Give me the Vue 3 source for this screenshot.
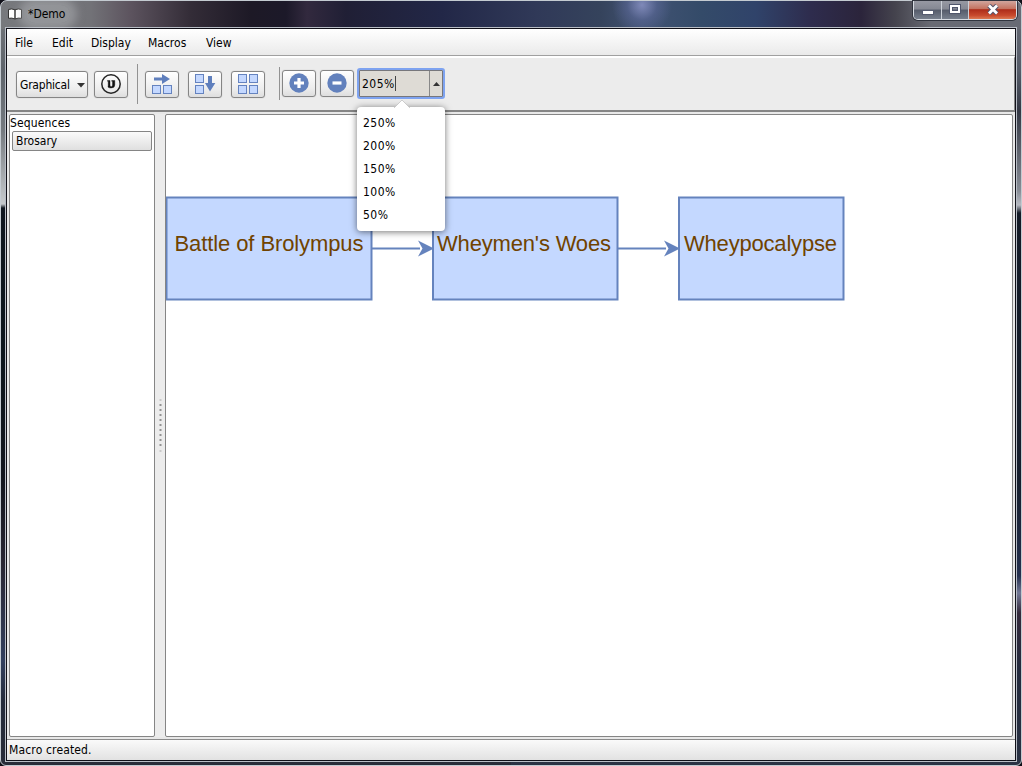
<script setup>
const menus = [
  { label: 'File', w: 37 },
  { label: 'Edit', w: 39 },
  { label: 'Display', w: 57 },
  { label: 'Macros', w: 58 },
  { label: 'View', w: 40 },
]
const zooms = ['250%', '200%', '150%', '100%', '50%']
</script>

<template>
  <div class="desktop">
    <div class="window">
      <header class="titlebar">
        <svg class="book" width="14" height="12" viewBox="0 0 14 12">
          <path d="M.5 1.500 Q3.500 .3 7 1.800 Q10.500 .3 13.500 1.500 V10.300 Q10 9.600 7 11 Q4 9.600 .5 10.300Z" fill="#fff" stroke="#333" stroke-width="1" />
          <path d="M7 1.500V11" stroke="#333" stroke-width="1.500" />
        </svg>
        <span class="title">*Demo</span>
        <div class="controls">
          <i class="min"><svg width="12" height="5"><rect x=".5" y=".5" width="11" height="4" fill="#fff" stroke="#555b70" /></svg></i>
          <i class="max"><svg width="12" height="10"><rect x="2" y="2" width="8" height="6" fill="none" stroke="#50566c" stroke-width="4" /><rect x="2" y="2" width="8" height="6" fill="none" stroke="#fff" stroke-width="2" /></svg></i>
          <i class="close"><svg width="14" height="11" viewBox="0 0 14 11"><path d="M3 1.500 L11 9.500 M11 1.500 L3 9.500" stroke="#52546c" stroke-width="4.800" /><path d="M3 1.500 L11 9.500 M11 1.500 L3 9.500" stroke="#fff" stroke-width="2.800" /></svg></i>
        </div>
      </header>

      <div class="client">
        <nav class="menubar">
          <span v-for="m in menus" :key="m.label" :style="{ width: m.w + 'px' }">{{ m.label }}</span>
        </nav>

        <div class="toolbar">
          <div class="btn select"><span>Graphical</span><svg width="8" height="5"><path d="M0 0H8L4 4.500Z" fill="#333" /></svg></div>
          <div class="btn ubtn">
            <svg width="22" height="22" viewBox="0 0 22 22">
              <circle cx="11" cy="11" r="9.200" fill="none" stroke="#252525" stroke-width="1.500" />
              <path d="M7.500 7.500H10V12.300Q10 13.700 11.200 13.700T12.500 12.300V8.300H11.700V7.500H14.800V12Q14.800 15 11 15T8.200 12.500V8.300H7.500Z" fill="#111" stroke="#111" stroke-width=".4" />
            </svg>
          </div>
          <b class="sep first" />
          <div class="btn arrange">
            <svg width="22" height="22" viewBox="0 0 22 22">
              <path d="M3 4.500H11V1L19 6L11 11V7.500H3Z" fill="#5f7fbd" />
              <g fill="#c4d8ff" stroke="#6583bf"><rect x="1.500" y="12.500" width="8" height="8" /><rect x="12.500" y="12.500" width="8" height="8" /></g>
            </svg>
          </div>
          <div class="btn arrange">
            <svg width="22" height="22" viewBox="0 0 22 22">
              <g fill="#c4d8ff" stroke="#6583bf"><rect x="1.500" y="1.500" width="8" height="8" /><rect x="1.500" y="12.500" width="8" height="8" /></g>
              <path d="M14 3H18V10H21.300L16 18.500L11 10H14Z" fill="#5f7fbd" />
            </svg>
          </div>
          <div class="btn arrange">
            <svg width="22" height="22" viewBox="0 0 22 22">
              <g fill="#c4d8ff" stroke="#6583bf"><rect x="1.500" y="1.500" width="8" height="8" /><rect x="12.500" y="1.500" width="8" height="8" /><rect x="1.500" y="12.500" width="8" height="8" /><rect x="12.500" y="12.500" width="8" height="8" /></g>
            </svg>
          </div>
          <b class="sep second" />
          <div class="btn zoom">
            <svg width="20" height="20"><circle cx="10" cy="10" r="9.700" fill="#6281bd" /><path d="M5 10H15M10 5V15" stroke="#fff" stroke-width="3.200" /></svg>
          </div>
          <div class="btn zoom minus">
            <svg width="20" height="20"><circle cx="10" cy="10" r="9.700" fill="#6281bd" /><path d="M5.500 10H14.500" stroke="#fff" stroke-width="3.200" /></svg>
          </div>
          <div class="combo">
            <div class="field"><span>205%</span><i class="caret" /></div>
            <div class="drop"><svg width="7" height="4"><path d="M0 4H7L3.500 0Z" fill="#333" /></svg></div>
            <div class="popup">
              <svg class="tip" width="16" height="8"><path d="M0 8L8 0L16 8" fill="#fff" stroke="#bbb" stroke-width=".7" /></svg>
              <div v-for="z in zooms" :key="z" class="option">{{ z }}</div>
            </div>
          </div>
        </div>

        <main class="body">
          <aside class="side">
            <div class="heading">Sequences</div>
            <div class="item">Brosary</div>
          </aside>
          <div class="splitter">
            <svg width="3" height="54" viewBox="0 0 3 54">
              <path d="M1.500 5V48" stroke="#939393" stroke-width="2" stroke-dasharray="2 3" />
              <path d="M1.500 0V2M1.500 51V53" stroke="#c9c9c9" stroke-width="2" />
            </svg>
          </div>
          <section class="canvas">
            <svg width="846" height="621" viewBox="166 115 846 621">
              <g fill="#c4d8ff" stroke="#6583bd" stroke-width="2">
                <rect x="166.500" y="197.500" width="205" height="102" />
                <rect x="433" y="197.500" width="184.500" height="102" />
                <rect x="679" y="197.500" width="164.500" height="102" />
              </g>
              <g stroke="#6583bd" stroke-width="2" fill="none"><path d="M372 248.500H420M618 248.500H666" /></g>
              <g fill="#6583bd"><path d="M418 240.500L434 248.500L418 256.500L422.500 248.500ZM664 240.500L680 248.500L664 256.500L668.500 248.500Z" /></g>
              <g class="label">
                <text x="174.500" y="251" textLength="189">Battle of Brolympus</text>
                <text x="437" y="251" textLength="174">Wheymen's Woes</text>
                <text x="684" y="251" textLength="153">Wheypocalypse</text>
              </g>
            </svg>
          </section>
        </main>

        <footer class="status">Macro created.</footer>
      </div>
    </div>
  </div>
</template>

<style>
html, body { margin: 0; overflow: hidden; }
</style>

<style scoped>
* { box-sizing: border-box; }
.desktop {
  width: 1022px; height: 766px; background: #101018;
  font: 12px "DejaVu Sans Condensed", "DejaVu Sans", "Noto Sans", sans-serif; font-stretch: condensed; color: #000;
}
.window {
  width: 1022px; height: 766px; padding: 0 5px 4px; border: 1px solid #c4cbd1; border-radius: 7px 7px 6px 6px;
  background:
    radial-gradient(ellipse 30px 30px at 641px 4px, rgba(134, 143, 192, .9), rgba(100, 112, 165, .45) 50%, transparent) 0 0 / 100% 28px no-repeat,
    linear-gradient(90deg, #77797d 0, #727277 90px, #5c535e 130px, #332c37 190px, #1d1926 250px, #1c1929 285px, #32293e 306px, #201f35 345px, #222747 440px, #303958 535px, #35435c 600px, #425373 641px, #344b69 700px, #30436a 755px, #2e2c4d 810px, #2b243b 860px, #45444e 895px, #696b74 930px, #686b75 1020px) 0 0 / 100% 28px no-repeat,
    linear-gradient(180deg, #77797d 0, #5e646b 70px, #757a80 130px, #c5c9cc 203px, #101720 207px, #0d161d 350px, #14171f 480px, #292733 560px, #33405e 660px, #252c3c 700px, #282c38 100%) 0 0 / 50% 100% no-repeat,
    linear-gradient(180deg, #6b6d76 0, #555b68 70px, #343844 110px, #888d96 190px, #b7bac2 204px, #141b27 212px, #171f2e 480px, #25304e 575px, #727895 592px, #352b3c 612px, #242b3e 670px, #2a3243 100%) 100% 0 / 50% 100% no-repeat;
}
.titlebar { height: 27px; display: flex; align-items: flex-start; padding-left: 2px; }
.book { margin-top: 7px; flex: none; }
.title {
  width: 44px; height: 18px; margin: 4px 0 0 4px; padding-left: 2px; line-height: 19px; letter-spacing: 0; white-space: nowrap;
  background: rgba(205, 208, 212, .34); box-shadow: 0 0 9px 7px rgba(205, 208, 212, .34); border-radius: 9px;
}
.controls {
  margin-left: auto; display: flex; width: 104px; height: 19px; border: 1px solid #d7dbe2; border-top: 0;
  border-radius: 0 0 5px 5px; overflow: hidden; box-shadow: 0 0 0 1px #30343e; flex: none; position: relative; right: -1px;
}
.controls i { display: flex; align-items: center; justify-content: center; }
.min, .max { background: linear-gradient(#9799a3, #858893 45%, #555b6a 50%, #777f8d); border-right: 1px solid #cbd0d8; }
.min { width: 28px; padding-top: 4px; }
.max { width: 27px; padding-bottom: 2px; }
.close { flex: 1; padding-bottom: 2px; background: linear-gradient(#d1a59d, #c4725f 44%, #ad2c19 48%, #c84a2d 80%, #dc7952); }

.client {
  width: 1010px; height: 733px; border: 1px solid #101018; box-shadow: 0 0 0 1px #b8bdc5; background: #e9e9e9;
  display: flex; flex-direction: column;
}
.menubar { height: 27px; flex: none; display: flex; padding-left: 8px; line-height: 28px; background: linear-gradient(#fff, #eaeaea); border-bottom: 1px solid #a0a0a0; }
.menubar span { white-space: nowrap; }
.toolbar {
  height: 56px; flex: none; display: flex; align-items: flex-start; padding: 13px 0 0 9px; background: #ececec;
  border-top: 2px solid #fff; border-bottom: 2px solid #858585; border-right: 1px solid #888;
}
.btn {
  height: 27px; width: 34px; flex: none; display: flex; align-items: center; justify-content: center; border: 1px solid #858585; border-radius: 3px;
  background: linear-gradient(#fff, #ececec 70%, #dedede); box-shadow: 0 0 1px #aaa;
}
.btn svg { position: relative; top: -.5px; }
.select { width: 72px; justify-content: flex-start; padding-left: 3px; }
.select span { width: 57px; letter-spacing: -.22px; }
.select svg { top: 1px; }
.ubtn { margin-left: 6px; }
.sep { width: 1px; background: #929292; flex: none; }
.sep.first { height: 40px; margin: -7px 7px 0 9px; }
.arrange { margin-right: 9px; }
.sep.second { height: 33px; margin: -4px 2px 0 5px; }
.zoom { margin-top: -1px; }
.minus { margin-left: 4px; }
.combo {
  position: relative; width: 88px; height: 31px; margin: -3px 0 0 3px; display: flex; border: 2px solid #7ea3f0; border-radius: 3px;
  background: #dedbd5; box-shadow: inset 0 0 0 1px #77777c;
}
.field { width: 71px; display: flex; align-items: center; padding-left: 3px; border-right: 1px solid #888; margin: 1px 0; letter-spacing: .5px; }
.caret { width: 1px; height: 15px; background: #444; }
.drop { flex: 1; display: flex; align-items: center; justify-content: center; }
.popup { position: absolute; z-index: 3; left: -2px; top: 37px; width: 88px; height: 124px; padding: 5px 6px; background: #fff; border-radius: 4px; box-shadow: 0 1px 7px rgba(0,0,0,.55); }
.option { height: 23px; line-height: 22px; letter-spacing: .5px; }
.tip { position: absolute; left: 37px; top: -7px; }

.body { flex: 1; min-height: 0; display: flex; padding: 2px 2px 2px 2px; background: #e8e8e8; }
.side, .canvas { background: #fff; border: 1px solid #858585; border-radius: 2px; }
.side { width: 146px; flex: none; }
.heading { height: 16px; line-height: 16px; letter-spacing: .15px; }
.item { height: 20px; line-height: 19px; margin: 0 2px; padding-left: 3px; border: 1px solid #858585; border-radius: 2px; background: linear-gradient(#fafafa, #dfdfdf); }
.splitter { width: 10px; flex: none; display: flex; align-items: center; justify-content: center; background: #ececec; }
.canvas { flex: 1; overflow: hidden; }
.canvas svg { display: block; }
.label { font: 22px "Liberation Sans", Arial, sans-serif; fill: #704300; }
.status { height: 21px; flex: none; padding-left: 2px; line-height: 20px; letter-spacing: .15px; border-top: 1px solid #8b8b8b; background: linear-gradient(#fafafa, #e2e2e2); }
</style>
